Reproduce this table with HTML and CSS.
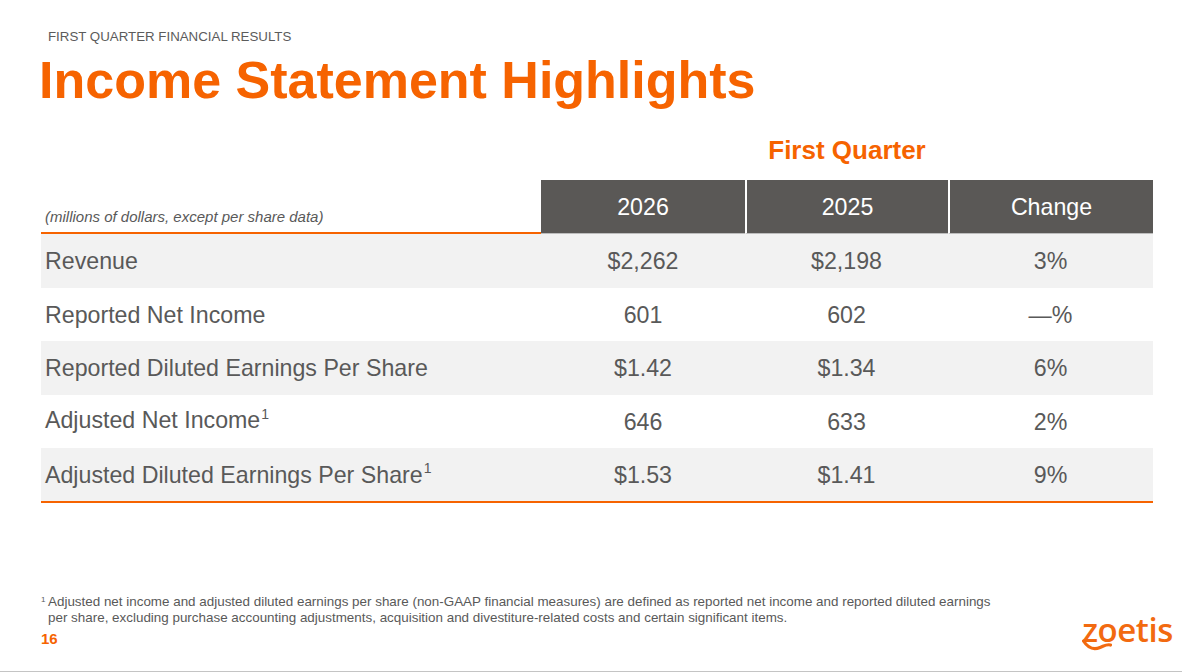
FILE: index.html
```html
<!DOCTYPE html>
<html lang="en">
<head>
<meta charset="utf-8">
<title>Income Statement Highlights</title>
<link rel="stylesheet" href="styles.css">
</head>
<body>
<div class="slide">
  <div class="kicker">FIRST QUARTER FINANCIAL RESULTS</div>
  <h1 class="title">Income Statement Highlights</h1>

  <div class="table">
    <div class="period">First Quarter</div>

    <div class="cell head-label">(millions of dollars, except per share data)</div>
    <div class="cell head">2026</div>
    <div class="cell head div">2025</div>
    <div class="cell head div">Change</div>

    <div class="cell label shade"><span>Revenue</span></div>
    <div class="cell num shade">$2,262</div>
    <div class="cell num shade">$2,198</div>
    <div class="cell num shade">3%</div>

    <div class="cell label"><span>Reported Net Income</span></div>
    <div class="cell num">601</div>
    <div class="cell num">602</div>
    <div class="cell num">—%</div>

    <div class="cell label shade"><span>Reported Diluted Earnings Per Share</span></div>
    <div class="cell num shade">$1.42</div>
    <div class="cell num shade">$1.34</div>
    <div class="cell num shade">6%</div>

    <div class="cell label raised"><span>Adjusted Net Income<sup>1</sup></span></div>
    <div class="cell num">646</div>
    <div class="cell num">633</div>
    <div class="cell num">2%</div>

    <div class="cell label shade last"><span>Adjusted Diluted Earnings Per Share<sup>1</sup></span></div>
    <div class="cell num shade last">$1.53</div>
    <div class="cell num shade last">$1.41</div>
    <div class="cell num shade last">9%</div>
  </div>

  <div class="footnote">
    <span class="fn-mark">1</span>
    <p class="fn-text">Adjusted net income and adjusted diluted earnings per share (non-GAAP financial measures) are defined as reported net income and reported diluted earnings per share, excluding purchase accounting adjustments, acquisition and divestiture-related costs and certain significant items.</p>
  </div>

  <div class="footer">
    <span class="page">16</span>
    <span class="logo">zoetis<svg class="swoosh" viewBox="0 0 30 12" width="30" height="12" aria-hidden="true"><path d="M1.5 2 C 6 9, 12 11, 18 8.5 S 25 5, 28.5 6" fill="none" stroke="#f26a10" stroke-width="3.2" stroke-linecap="round"/></svg></span>
  </div>
</div>
</body>
</html>
```

FILE: styles.css
```css
html, body {
  margin: 0;
  padding: 0;
  background: #ffffff;
}

.slide {
  width: 1182px;
  height: 672px;
  box-sizing: border-box;
  padding: 29px 29px 0 41px;
  border-bottom: 1px solid #c4c4c4;
  display: flex;
  flex-direction: column;
  font-family: "Liberation Sans", Arial, sans-serif;
  color: #595959;
}

.kicker {
  font-size: 13.3px;
  line-height: 15px;
  padding-left: 7px;
  color: #5b5b5b;
}

.title {
  margin: 8px 0 0 -2px;
  font-size: 52px;
  line-height: 56px;
  font-weight: bold;
  color: #f66300;
}

.table {
  margin-top: 27px;
  display: grid;
  grid-template-columns: 500px 204px 203px 205px;
}

.period {
  grid-column: 2 / 5;
  text-align: center;
  font-size: 26px;
  line-height: 30px;
  font-weight: bold;
  color: #f66300;
  height: 45px;
}

.cell {
  display: flex;
  align-items: center;
  box-sizing: border-box;
  height: 53.5px;
  font-size: 23.2px;
  padding-top: 2px;
}

.head-label {
  height: 54px;
  align-items: flex-end;
  padding: 0 0 7px 4px;
  font-size: 15px;
  font-style: italic;
  border-bottom: 2px solid #f66300;
}

.head {
  height: 54px;
  justify-content: center;
  background: #5a5856;
  color: #ffffff;
  border-bottom: 1px solid #bdbdbd;
  padding-top: 1px;
}

.head.div {
  border-left: 2px solid #ffffff;
}

.label {
  padding-left: 4px;
}

.raised {
  padding-top: 0;
  padding-bottom: 1px;
}

.num {
  justify-content: center;
}

.shade {
  background: #f2f2f2;
}

.last {
  border-bottom: 2px solid #f66300;
  height: 55px;
}

sup {
  font-size: 14px;
  line-height: 0;
  vertical-align: super;
  position: relative;
  top: -1px;
  margin-left: 1px;
}

.footnote {
  margin-top: auto;
  display: flex;
  font-size: 13.42px;
  line-height: 15.3px;
  color: #595959;
}

.fn-mark {
  width: 7px;
  flex: none;
  font-size: 8px;
  line-height: 11px;
}

.fn-text {
  margin: 0;
  width: 950px;
}

.footer {
  margin-top: 5px;
  height: 41px;
  display: flex;
  justify-content: space-between;
  align-items: flex-start;
}

.page {
  font-size: 15px;
  line-height: 17px;
  font-weight: bold;
  color: #f66300;
}

.logo {
  position: relative;
  margin: -20px -20px 0 0;
  font-family: "Open Sans", "DejaVu Sans", sans-serif;
  font-weight: 600;
  font-size: 33px;
  line-height: 40px;
  letter-spacing: -0.4px;
  color: #f26a10;
}

.swoosh {
  position: absolute;
  left: 0;
  top: 29px;
}
```
